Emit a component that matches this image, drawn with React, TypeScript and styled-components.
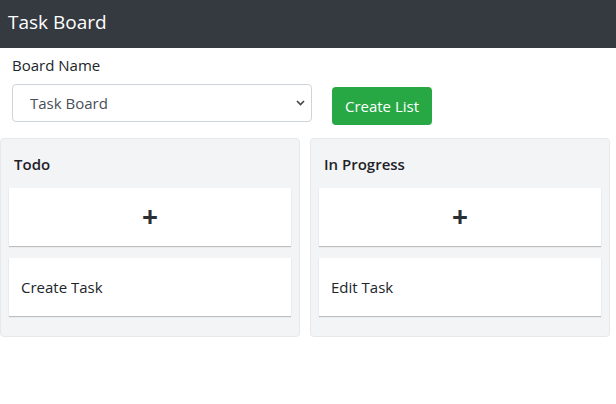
import React from "react";
import styled, { createGlobalStyle } from "styled-components";

const Global = createGlobalStyle`
  html, body { margin: 0; padding: 0; background: #fff; }
  body {
    font-family: "Open Sans", "Noto Sans", sans-serif;
    color: #212529;
    font-size: 15px;
  }
  * { box-sizing: border-box; }
`;

const Header = styled.header`
  height: 48px;
  background: #343a40;
  color: #fff;
  display: flex;
  align-items: center;
  padding: 0 8px 5px;
  font-size: 19px;
`;

const Form = styled.div`
  padding: 6px 12px 0;
`;

const Label = styled.label`
  display: block;
  font-size: 15px;
  line-height: 22px;
  margin-bottom: 8px;
`;

const Row = styled.div`
  display: flex;
  align-items: flex-start;
  gap: 20px;
`;

const SelectWrap = styled.div`
  position: relative;
  width: 300px;
  height: 38px;
`;

const Select = styled.select`
  appearance: none;
  width: 100%;
  height: 100%;
  border: 1px solid #ced4da;
  border-radius: 4px;
  background: #fff;
  font-family: inherit;
  font-size: 15px;
  color: #495057;
  padding: 0 30px 0 17px;
`;

const Chevron = styled.svg`
  position: absolute;
  right: 7px;
  top: 16px;
  pointer-events: none;
`;

const Button = styled.button`
  margin-top: 3px;
  width: 100px;
  height: 38px;
  border: none;
  border-radius: 4px;
  background: #28a745;
  color: #fff;
  font-family: inherit;
  font-size: 15px;
`;

const Board = styled.div`
  display: grid;
  grid-template-columns: 300px 300px;
  gap: 10px;
  margin-top: 13px;
`;

const Column = styled.section`
  background: #f3f4f6;
  border: 1px solid #e6e8eb;
  border-radius: 4px;
  padding: 0 8px 8px;
`;

const ColumnTitle = styled.h2`
  margin: 0;
  height: 49px;
  display: flex;
  align-items: center;
  padding-left: 5px;
  font-size: 15px;
  font-weight: 600;
  color: #1f2328;
`;

const Card = styled.div<{ $center?: boolean }>`
  height: 58px;
  background: #fff;
  box-shadow: 0 1px 1px rgba(0, 0, 0, 0.22);
  margin-bottom: 12px;
  display: flex;
  align-items: center;
  justify-content: ${(p) => (p.$center ? "center" : "flex-start")};
  padding: 0 12px;
  font-size: 15px;
`;

const Plus = styled.span`
  font-size: 28px;
  font-weight: 700;
  color: #2b2f33;
  line-height: 1;
  margin-top: -3px;
`;

const lists = [
  { title: "Todo", tasks: ["Create Task"] },
  { title: "In Progress", tasks: ["Edit Task"] },
];

export default function App() {
  return (
    <>
      <Global />
      <Header>Task Board</Header>
      <Form>
        <Label>Board Name</Label>
        <Row>
          <SelectWrap>
            <Select defaultValue="Task Board">
              <option>Task Board</option>
            </Select>
            <Chevron width="9" height="6" viewBox="0 0 9 6">
              <path d="M1 1l3.5 3.5L8 1" fill="none" stroke="#444" strokeWidth="1.6" />
            </Chevron>
          </SelectWrap>
          <Button>Create List</Button>
        </Row>
      </Form>
      <Board>
        {lists.map((l) => (
          <Column key={l.title}>
            <ColumnTitle>{l.title}</ColumnTitle>
            <Card $center>
              <Plus>+</Plus>
            </Card>
            {l.tasks.map((t) => (
              <Card key={t}>{t}</Card>
            ))}
          </Column>
        ))}
      </Board>
    </>
  );
}
